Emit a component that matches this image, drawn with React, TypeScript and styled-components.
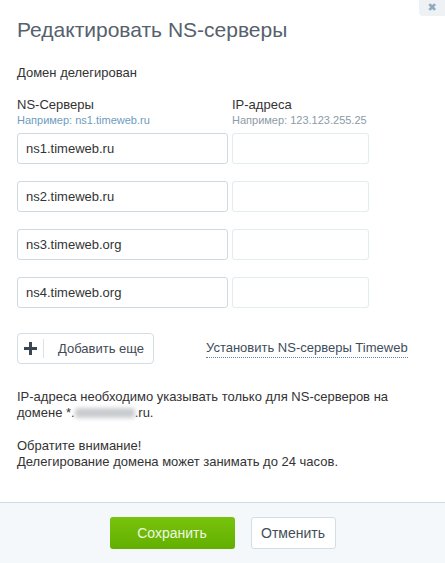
import styled, { createGlobalStyle } from "styled-components"

const GlobalStyle = createGlobalStyle`
    html, body {
        margin: 0;
        padding: 0;
        background: #ffffff;
    }
    body {
        font-family: "Liberation Sans", Arial, sans-serif;
        color: #333333;
    }
`

const Modal = styled.div`
    width: 445px;
    height: 563px;
    display: flex;
    flex-direction: column;
    position: relative;
    background: #ffffff;
`

const CloseButton = styled.button`
    position: absolute;
    top: 0;
    right: 0;
    width: 26px;
    height: 16px;
    border: none;
    padding: 0;
    background: #eef2f5;
    border-bottom-left-radius: 4px;
    color: #8fa9c0;
    font-family: "DejaVu Sans", sans-serif;
    font-size: 11px;
    font-weight: bold;
    line-height: 16px;
    text-align: center;
`

const Body = styled.div`
    flex: 1;
    padding: 15px 17px 0 17px;
`

const Title = styled.h1`
    margin: 0;
    font-size: 21px;
    font-weight: 400;
    line-height: 30px;
    color: #56616d;
`

const Subtitle = styled.div`
    margin-top: 20px;
    font-size: 13px;
    line-height: 16px;
    color: #333333;
`

const Columns = styled.div`
    display: grid;
    grid-template-columns: 211px 137px;
    column-gap: 4px;
`

const HeadRow = styled(Columns)`
    margin-top: 16px;
`

const FieldRows = styled(Columns)`
    margin-top: 6px;
    row-gap: 17px;
`

const ColumnHead = styled.div`
    display: flex;
    flex-direction: column;
`

const HeadLabel = styled.span`
    font-size: 13px;
    line-height: 16px;
    color: #333333;
`

const Hint = styled.span<{ $blue?: boolean }>`
    margin-top: 1px;
    font-size: 11px;
    line-height: 13px;
    color: ${p => (p.$blue ? "#6e9cc0" : "#8d9ba6")};
`

const Field = styled.input<{ $light?: boolean }>`
    box-sizing: border-box;
    height: 31px;
    width: 100%;
    margin: 0;
    padding: 0 8px;
    border: 1px solid ${p => (p.$light ? "#e2ebee" : "#cddbe1")};
    border-radius: 3px;
    background: #ffffff;
    font-family: "Liberation Sans", Arial, sans-serif;
    font-size: 13px;
    color: #333333;
    outline: none;
`

const ActionRow = styled.div`
    margin-top: 25px;
    display: flex;
    align-items: center;
    gap: 52px;
`

const AddButton = styled.button`
    box-sizing: border-box;
    height: 31px;
    width: 137px;
    display: flex;
    align-items: center;
    padding: 0;
    border: 1px solid #d2dee3;
    border-radius: 4px;
    background: #ffffff;
    font-family: "Liberation Sans", Arial, sans-serif;
    font-size: 13px;
    color: #3f4a55;
`

const PlusBox = styled.span`
    width: 25px;
    height: 19px;
    display: flex;
    align-items: center;
    justify-content: center;
    border-right: 1px solid #d8e2e7;
`

const AddLabel = styled.span`
    padding-left: 14px;
`

const DottedLink = styled.a`
    font-size: 13px;
    line-height: 16px;
    color: #3d4d5c;
    text-decoration: none;
    border-bottom: 1px dotted #5b87ad;
    padding-bottom: 1px;
`

const Notes = styled.div`
    margin-top: 25px;
`

const Note = styled.p`
    margin: 0;
    font-size: 13px;
    line-height: 16px;
    color: #333333;
    & + & {
        margin-top: 17px;
    }
`

const Blurred = styled.span`
    display: inline-block;
    width: 60px;
    height: 10px;
    vertical-align: -1px;
    background: #c9cccf;
    filter: blur(2px);
    border-radius: 3px;
`

const Footer = styled.div`
    height: 60px;
    border-top: 1px solid #cfdde3;
    background: #f5f8fa;
    display: flex;
    justify-content: center;
    align-items: center;
    gap: 16px;
`

const SaveButton = styled.button`
    box-sizing: border-box;
    width: 125px;
    height: 32px;
    border: none;
    border-radius: 3px;
    background: linear-gradient(#78c30c, #63af00);
    color: #eef7e2;
    font-family: "Liberation Sans", Arial, sans-serif;
    font-size: 14px;
`

const CancelButton = styled.button`
    box-sizing: border-box;
    width: 85px;
    height: 32px;
    border: 1px solid #d2dee3;
    border-radius: 3px;
    background: #ffffff;
    color: #3f4d5a;
    font-family: "Liberation Sans", Arial, sans-serif;
    font-size: 14px;
`

const servers = ["ns1.timeweb.ru", "ns2.timeweb.ru", "ns3.timeweb.org", "ns4.timeweb.org"]

const App = () => {
    return (
        <>
            <GlobalStyle />
            <Modal>
                <CloseButton>✖</CloseButton>
                <Body>
                    <Title>Редактировать NS-серверы</Title>
                    <Subtitle>Домен делегирован</Subtitle>
                    <HeadRow>
                        <ColumnHead>
                            <HeadLabel>NS-Серверы</HeadLabel>
                            <Hint $blue>Например: ns1.timeweb.ru</Hint>
                        </ColumnHead>
                        <ColumnHead>
                            <HeadLabel>IP-адреса</HeadLabel>
                            <Hint>Например: 123.123.255.25</Hint>
                        </ColumnHead>
                    </HeadRow>
                    <FieldRows>
                        {servers.flatMap(s => [
                            <Field key={s} defaultValue={s} />,
                            <Field key={s + "-ip"} $light />
                        ])}
                    </FieldRows>
                    <ActionRow>
                        <AddButton>
                            <PlusBox>
                                <svg width="13" height="13" viewBox="0 0 13 13">
                                    <path d="M5 0h3v5h5v3H8v5H5V8H0V5h5z" fill="#3a4652" />
                                </svg>
                            </PlusBox>
                            <AddLabel>Добавить еще</AddLabel>
                        </AddButton>
                        <DottedLink href="#">Установить NS-серверы Timeweb</DottedLink>
                    </ActionRow>
                    <Notes>
                        <Note>
                            IP-адреса необходимо указывать только для NS-серверов на домене *.<Blurred />.ru.
                        </Note>
                        <Note>
                            Обратите внимание!
                            <br />
                            Делегирование домена может занимать до 24 часов.
                        </Note>
                    </Notes>
                </Body>
                <Footer>
                    <SaveButton>Сохранить</SaveButton>
                    <CancelButton>Отменить</CancelButton>
                </Footer>
            </Modal>
        </>
    )
}

export default App
